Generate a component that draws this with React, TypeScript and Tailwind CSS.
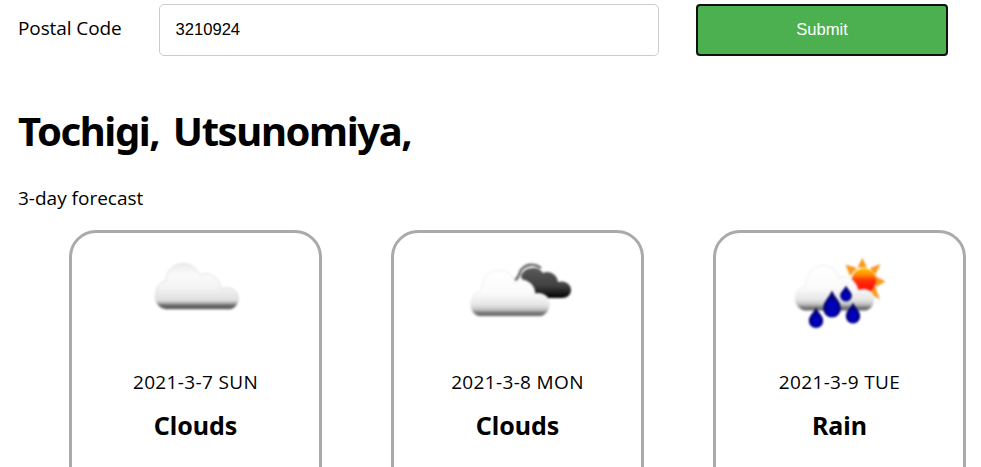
import type { ReactNode } from "react";

function Defs({ id }: { id: string }) {
  return (
    <defs>
      <linearGradient id={`${id}-grey`} x1="0" y1="0" x2="0" y2="1">
        <stop offset="0" stopColor="#ececec" />
        <stop offset="0.25" stopColor="#fafafa" />
        <stop offset="0.5" stopColor="#f5f5f5" />
        <stop offset="0.8" stopColor="#e0e0e0" />
        <stop offset="0.86" stopColor="#b0b0b0" />
        <stop offset="0.92" stopColor="#606060" />
        <stop offset="1" stopColor="#606060" />
      </linearGradient>
      <linearGradient id={`${id}-cloud`} x1="0" y1="0" x2="0" y2="1">
        <stop offset="0" stopColor="#ffffff" />
        <stop offset="0.5" stopColor="#fbfbfb" />
        <stop offset="0.75" stopColor="#e6e6e6" />
        <stop offset="0.85" stopColor="#c4c4c4" />
        <stop offset="0.94" stopColor="#6c6c6c" />
        <stop offset="1" stopColor="#707070" />
      </linearGradient>
      <linearGradient id={`${id}-dark`} x1="0" y1="0" x2="0" y2="1">
        <stop offset="0" stopColor="#5a5a5a" />
        <stop offset="0.6" stopColor="#404040" />
        <stop offset="1" stopColor="#000000" />
      </linearGradient>
      <linearGradient id={`${id}-sun`} x1="0" y1="0" x2="0" y2="1">
        <stop offset="0" stopColor="#ffc400" />
        <stop offset="0.25" stopColor="#ff9000" />
        <stop offset="0.5" stopColor="#ff3008" />
        <stop offset="1" stopColor="#fa0505" />
      </linearGradient>
      <radialGradient id={`${id}-drop`} cx="0.5" cy="0.65" r="0.55">
        <stop offset="0" stopColor="#0000d8" />
        <stop offset="0.4" stopColor="#0000b0" />
        <stop offset="1" stopColor="#00005c" />
      </radialGradient>
    </defs>
  );
}

function CloudIcon() {
  return (
    <svg className="h-[90px] w-[130px] blur-[0.9px]" viewBox="130 239.500 130 90">
      <Defs id="c" />
      <path
        d="M166 309 C158 308 154 301 155.500 293 C156.500 286 160 282 166 280 C167 268 175 263 183 263 C191 263 196 267 200 275 C208 270 219 276 221 288 C229 285 238.500 289 238.500 298 C238.500 304 235 308 230 309 Z"
        fill="url(#c-grey)"
        stroke="#d9d9d9"
        strokeWidth="0.8"
      />
    </svg>
  );
}

function BrokenCloudsIcon() {
  return (
    <svg className="h-[90px] w-[130px] blur-[0.9px]" viewBox="452 240 130 90">
      <Defs id="b" />
      <path d="M515 280 C519 278 519 274 521 270 C526 264 534 263 541 268" fill="none" stroke="#6a6a6a" strokeWidth="2.600" />
      <path
        d="M521 277 C522 271 527 268 533 268 C538 268 541 270 543 273 C549 270 557 274 558 282 C565 280 571 284 571 290 C571 295 567 298 562 298 L537 298 L526 285 Z"
        fill="url(#b-dark)"
      />
      <path
        d="M479 316.500 C472 315 469 308 471 301 C472 296 475 292 481 291 C482 279 487 271 498 270 C506 270 512 274 515 282 C524 277 534 283 535 294 C544 292 550 298 549.500 306 C549 312 546 315 541 316.500 Z"
        fill="url(#b-cloud)"
        stroke="#f0f0f0"
        strokeWidth="1.2"
      />
    </svg>
  );
}

const drops: [number, number, number, number][] = [
  [832, 290.500, 8.800, 27],
  [846, 285.500, 5.800, 16],
  [816, 307.500, 7.200, 20.500],
  [853, 302.500, 7.200, 21],
];

function RainIcon() {
  return (
    <svg className="h-[90px] w-[130px] blur-[0.8px]" viewBox="774 240 130 90">
      <Defs id="r" />
      <path
        d="M857.500 267.500 L862.300 258 L867 267.500 Z M870 268 L880.500 264 L875.500 274.500 Z M876 276.500 L885.500 281.500 L876 287 Z M875.500 286.500 L879.500 299.500 L868 292 Z M845.500 264.500 L857 268 L850 276 Z"
        fill="#f8981c"
      />
      <circle cx="864" cy="280.500" r="12.200" fill="url(#r-sun)" />
      <path
        d="M804 311 C797 309 793.500 302 795.500 296 C797 290 800 287 805.500 286 C806 273 813 266 823 265.500 C831 265.500 836 270 839.500 278 C847 274 855 280 858.500 291 C867 287 874.500 293 874 301 C873.500 307 870 310 866 311 Z"
        fill="url(#r-cloud)"
        stroke="#f0f0f0"
        strokeWidth="1.2"
      />
      {drops.map(([x, y, r, h]) => (
        <path
          key={x}
          d={`M${x} ${y} C${x + r * 0.4} ${y + h * 0.3} ${x + r} ${y + h * 0.4} ${x + r} ${y + h - r} A${r} ${r} 0 0 1 ${x - r} ${y + h - r} C${x - r} ${y + h * 0.4} ${x - r * 0.4} ${y + h * 0.3} ${x} ${y} Z`}
          fill="url(#r-drop)"
        />
      ))}
    </svg>
  );
}

function DayCard({ icon, date, weather }: { icon: ReactNode; date: string; weather: string }) {
  return (
    <article className="flex h-[300px] w-[253px] shrink-0 flex-col items-center rounded-[27px] border-[3px] border-[#aaaaaa] pt-[7px]">
      <div className="-ml-px flex">{icon}</div>
      <p className="mt-[38px] text-[19px] leading-[28px] tracking-[0.35px]">{date}</p>
      <h2 className="mt-[11px] font-['Noto_Sans',sans-serif] text-[25px] font-bold leading-[36px]">{weather}</h2>
    </article>
  );
}

export default function App() {
  return (
    <main className="h-[467px] w-[981px] overflow-hidden bg-white pl-[18px] pt-1 font-['Open_Sans','Noto_Sans',sans-serif] text-black">
      <form className="flex h-[52px]" onSubmit={(e) => e.preventDefault()}>
        <label htmlFor="postal" className="w-[141px] pt-[10px] text-[19px] leading-[28px] tracking-[-0.1px]">
          Postal Code
        </label>
        <input
          id="postal"
          defaultValue="3210924"
          className="w-[500px] rounded-[5px] border border-[#cccccc] px-[15.500px] font-['Liberation_Sans',Arial,sans-serif] text-[16.600px] outline-none"
        />
        <button
          type="submit"
          className="ml-[37px] w-[252px] rounded-[4px] border-2 border-[#101010] bg-[#4caf50] font-['Liberation_Sans',Arial,sans-serif] text-[16.600px] text-white"
        >
          Submit
        </button>
      </form>
      <h1 className="mt-[45px] font-['Noto_Sans',sans-serif] text-[40px] font-bold leading-[60px] tracking-[-1.4px] [word-spacing:4.500px]">
        Tochigi, Utsunomiya,
      </h1>
      <p className="mt-[23px] text-[19px] leading-[28px]">3-day forecast</p>
      <section className="ml-[51px] mt-[18px] flex gap-[69px]">
        <DayCard icon={<CloudIcon />} date="2021-3-7 SUN" weather="Clouds" />
        <DayCard icon={<BrokenCloudsIcon />} date="2021-3-8 MON" weather="Clouds" />
        <DayCard icon={<RainIcon />} date="2021-3-9 TUE" weather="Rain" />
      </section>
    </main>
  );
}
